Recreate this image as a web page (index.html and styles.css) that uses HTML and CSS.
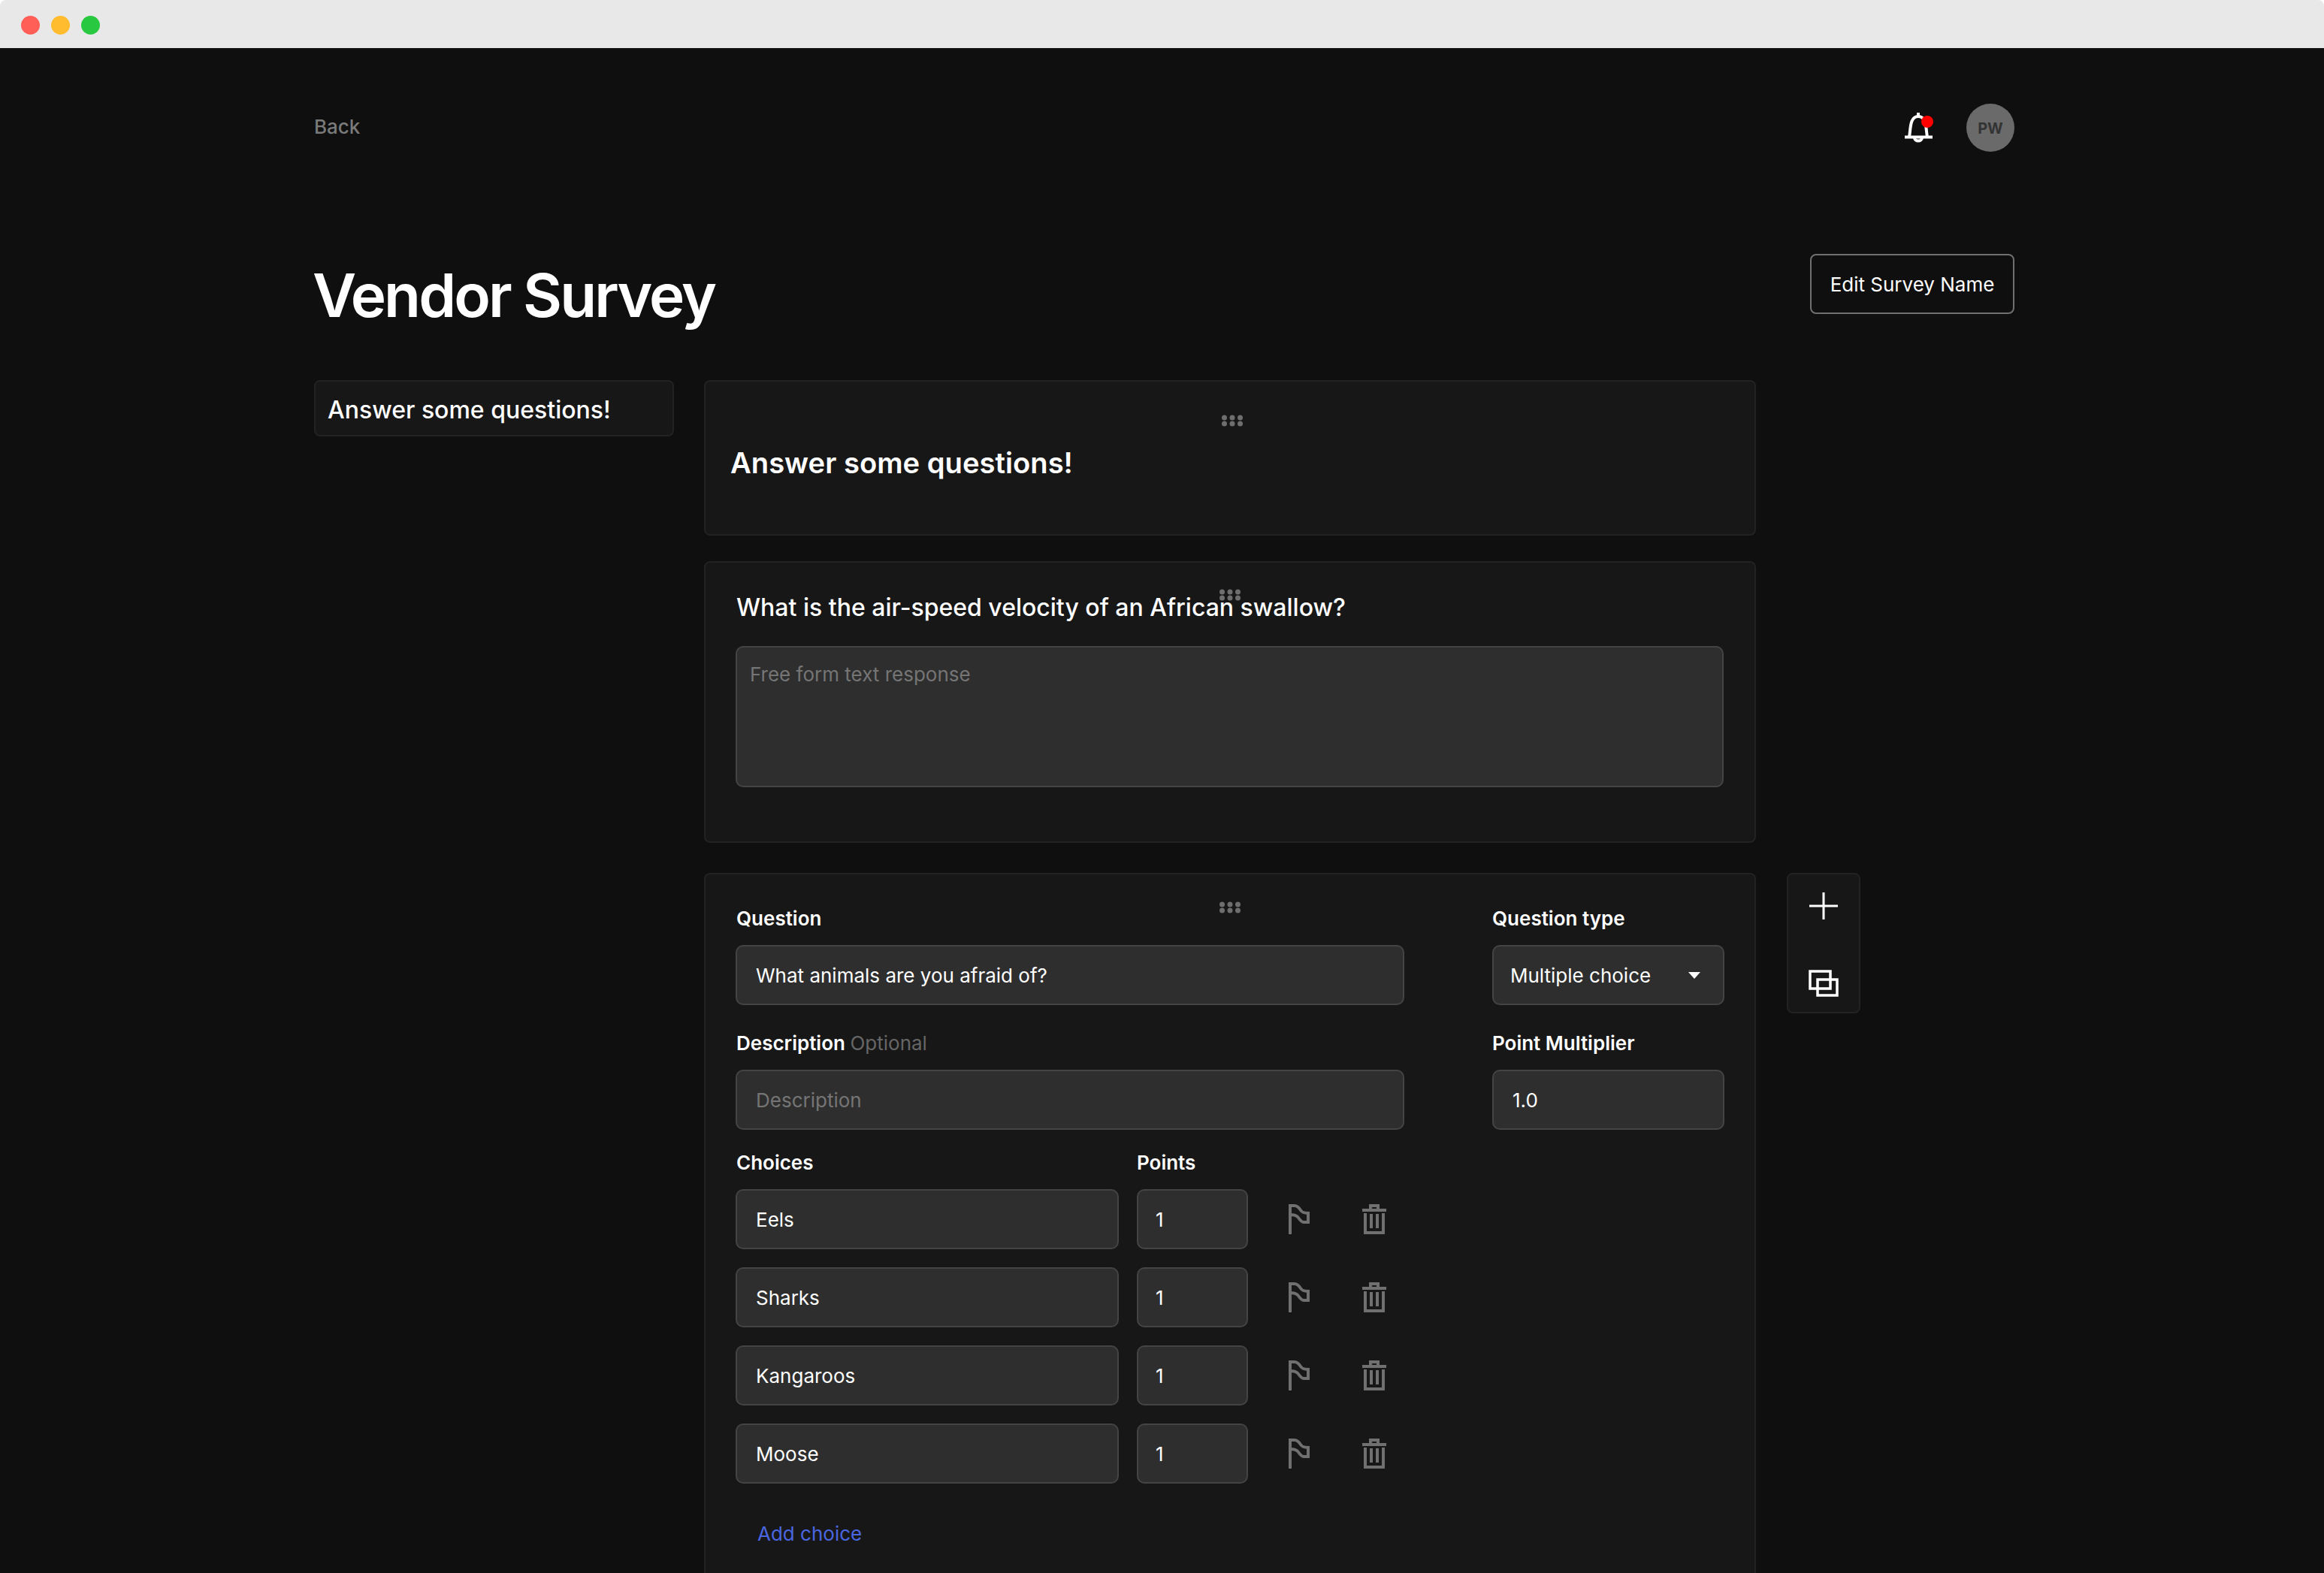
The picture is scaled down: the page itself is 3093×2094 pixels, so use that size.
FILE: index.html
```html
<!DOCTYPE html>
<html lang="en">
<head>
    <meta charset="UTF-8">
    <meta name="viewport" content="width=device-width, initial-scale=1.0">
    <title>Vendor Survey</title>
    <link rel="stylesheet" href="styles.css">
</head>
<body>
    <div class="titlebar">
        <span class="light light-red"></span>
        <span class="light light-yellow"></span>
        <span class="light light-green"></span>
    </div>

    <div class="page">
        <div class="topbar">
            <a class="back">Back</a>
            <div class="topbar-right">
                <svg class="bell" width="38" height="40" viewBox="0 0 38 40" fill="none" stroke="#fff" stroke-width="4">
                    <path d="M18 0V5"/>
                    <path d="M6 32C8 24 6 5 18 5C30 5 28 24 30 32"/>
                    <path d="M0 32.5H37"/>
                    <path d="M13 33C13 39 23 39 23 33"/>
                    <circle cx="30" cy="12" r="8" fill="#f00" stroke="none"/>
                </svg>
                <div class="avatar">PW</div>
            </div>
        </div>

        <div class="title-row">
            <h1>Vendor Survey</h1>
            <button class="edit-btn">Edit Survey Name</button>
        </div>

        <div class="columns">
            <div class="sidebar">Answer some questions!</div>

            <div class="main">
                <div class="card card-section">
                    <svg class="drag drag-section" width="28" height="16" viewBox="0 0 28 16"><use href="#dots"/></svg>
                    <h2>Answer some questions!</h2>
                </div>

                <div class="card card-text">
                    <svg class="drag drag-text" width="28" height="16" viewBox="0 0 28 16"><use href="#dots"/></svg>
                    <h3>What is the air-speed velocity of an African swallow?</h3>
                    <textarea class="input response" placeholder="Free form text response"></textarea>
                </div>

                <div class="card card-edit">
                    <svg class="drag drag-edit" width="28" height="16" viewBox="0 0 28 16"><use href="#dots"/></svg>
                    <div class="form-left">
                        <label>Question</label>
                        <input class="input" value="What animals are you afraid of?">
                        <label class="label-next">Description <span class="optional">Optional</span></label>
                        <input class="input" placeholder="Description">

                        <div class="choice-head">
                            <label class="choice-label">Choices</label>
                            <label>Points</label>
                        </div>

                        <div class="choice">
                            <input class="input choice-name" value="Eels">
                            <input class="input choice-points" value="1">
                            <svg class="flag" width="28" height="40" viewBox="0 0 28 40"><use href="#flag"/></svg>
                            <svg class="trash" width="32" height="40" viewBox="0 0 32 40"><use href="#trash"/></svg>
                        </div>
                        <div class="choice">
                            <input class="input choice-name" value="Sharks">
                            <input class="input choice-points" value="1">
                            <svg class="flag" width="28" height="40" viewBox="0 0 28 40"><use href="#flag"/></svg>
                            <svg class="trash" width="32" height="40" viewBox="0 0 32 40"><use href="#trash"/></svg>
                        </div>
                        <div class="choice">
                            <input class="input choice-name" value="Kangaroos">
                            <input class="input choice-points" value="1">
                            <svg class="flag" width="28" height="40" viewBox="0 0 28 40"><use href="#flag"/></svg>
                            <svg class="trash" width="32" height="40" viewBox="0 0 32 40"><use href="#trash"/></svg>
                        </div>
                        <div class="choice">
                            <input class="input choice-name" value="Moose">
                            <input class="input choice-points" value="1">
                            <svg class="flag" width="28" height="40" viewBox="0 0 28 40"><use href="#flag"/></svg>
                            <svg class="trash" width="32" height="40" viewBox="0 0 32 40"><use href="#trash"/></svg>
                        </div>

                        <a class="add-choice">Add choice</a>
                    </div>

                    <div class="form-right">
                        <label>Question type</label>
                        <div class="input select">
                            <span>Multiple choice</span>
                            <span class="caret"></span>
                        </div>
                        <label class="label-next">Point Multiplier</label>
                        <input class="input" value="1.0">
                    </div>
                </div>
            </div>

            <div class="toolbar">
                <svg width="38" height="38" viewBox="0 0 38 38" fill="none" stroke="#fff" stroke-width="3">
                    <path d="M19 1V37M0 19H38"/>
                </svg>
                <svg width="40" height="36" viewBox="0 0 40 36" fill="none" stroke="#fff" stroke-width="3.5">
                    <rect x="2" y="2" width="27" height="23"/>
                    <rect x="12" y="13" width="26" height="21"/>
                </svg>
            </div>
        </div>
    </div>

    <!-- shared icons -->
    <svg class="defs" width="0" height="0">
        <defs>
            <g id="dots" fill="#6e6e6e">
                <circle cx="3.5" cy="4" r="3.5"/><circle cx="14" cy="4" r="3.5"/><circle cx="24.5" cy="4" r="3.5"/>
                <circle cx="3.5" cy="12" r="3.5"/><circle cx="14" cy="12" r="3.5"/><circle cx="24.5" cy="12" r="3.5"/>
            </g>
            <path id="flag" fill="none" stroke="#707070" stroke-width="4" d="M2 40V2H8C12 2 14 5 16 8C18 11 20 12 26 12V24H20C17 24 15 21 13 18C11 15 8 14 2 14"/>
            <g id="trash" fill="none" stroke="#707070" stroke-width="4">
                <path d="M0 8H32"/>
                <path d="M11 7V2H21V7"/>
                <path d="M4 12V38H28V12"/>
                <path d="M12 13V32M20 13V32"/>
            </g>
        </defs>
    </svg>
</body>
</html>
```

FILE: styles.css
```css
* {
    box-sizing: border-box;
}
html, body {
    margin: 0;
    height: 2094px;
    overflow: hidden;
    background-color: #fff;
}
body {
    font-family: Inter, "Liberation Sans", sans-serif;
    color: #fff;
}
.titlebar {
    display: flex;
    align-items: center;
    gap: 15px;
    height: 64px;
    padding: 2px 0 0 28px;
    background-color: #e8e8e8;
    border-radius: 8px 8px 0 0;
}
.light {
    width: 25px;
    height: 25px;
    border-radius: 50%;
}
.light-red { background-color: #ff5f57; }
.light-yellow { background-color: #febc2e; }
.light-green { background-color: #28c840; }

.page {
    height: 2030px;
    padding: 74px 412px 0 418px;
    background-color: #0f0f0f;
}
.topbar {
    display: flex;
    justify-content: space-between;
    align-items: center;
    height: 64px;
}
.back {
    padding-bottom: 4px;
    font-size: 26px;
    font-weight: 500;
    color: #7a7a7a;
}
.topbar-right {
    display: flex;
    align-items: center;
    gap: 44px;
}
.avatar {
    display: flex;
    align-items: center;
    justify-content: center;
    width: 64px;
    height: 64px;
    padding-top: 2px;
    border-radius: 50%;
    background-color: #6a6a6a;
    color: #333;
    font-size: 20px;
    font-weight: 700;
}
.title-row {
    display: flex;
    justify-content: space-between;
    align-items: flex-start;
    height: 168px;
    margin-top: 136px;
}
h1 {
    margin: 0 0 0 -2px;
    font-size: 80px;
    font-weight: 600;
    line-height: 110px;
    letter-spacing: -2.9px;
}
.edit-btn {
    width: 272px;
    height: 80px;
    padding: 0;
    background-color: transparent;
    border: 2px solid #707070;
    border-radius: 8px;
    color: #fff;
    font-family: inherit;
    font-size: 26px;
}

.columns {
    display: flex;
    align-items: flex-start;
}
.sidebar {
    flex: none;
    width: 479px;
    height: 75px;
    margin-right: 40px;
    padding: 0 16px;
    line-height: 75px;
    font-size: 32px;
    font-weight: 500;
    background-color: #171717;
    border: 2px solid #222;
    border-radius: 8px;
}
.main {
    flex: none;
    width: 1400px;
    margin-right: 41px;
}
.card {
    position: relative;
    background-color: #171717;
    border: 2px solid #222;
    border-radius: 8px;
}
.drag {
    position: absolute;
}
.drag-section { left: 687px; top: 44px; }
.drag-text { left: 684px; top: 35px; }
.drag-edit { left: 684px; top: 36px; }

.card-section {
    height: 207px;
    padding: 82px 33px 0;
}
h2 {
    margin: 0;
    font-size: 38.2px;
    font-weight: 600;
    line-height: 52px;
}
.card-text {
    height: 375px;
    margin-top: 34px;
    padding: 40px 41px 0 40px;
}
h3 {
    margin: 0 0 31px 1px;
    font-size: 32px;
    font-weight: 550;
    line-height: 40px;
}
.card-edit {
    display: flex;
    gap: 117px;
    margin-top: 40px;
    padding: 41px 41px 60px 40px;
}
.form-left {
    flex: none;
    width: 890px;
}
.form-right {
    flex: none;
    width: 309px;
}
label {
    display: block;
    margin-bottom: 17px;
    font-size: 26px;
    font-weight: 600;
    line-height: 36px;
}
.form-left > label, .choice-label {
    padding-left: 1px;
}
.label-next {
    margin-top: 33px;
}
.optional {
    font-weight: 400;
    color: #666;
}
.input {
    display: block;
    width: 100%;
    height: 80px;
    padding: 0 25px;
    background-color: #2e2e2e;
    border: 2px solid #444;
    border-radius: 10px;
    outline: none;
    color: #fff;
    font-family: inherit;
    font-size: 26px;
}
.input::placeholder {
    color: #757575;
    opacity: 1;
}
.response {
    height: 188px;
    padding: 18px 17px;
    resize: none;
    line-height: 36px;
}
.select {
    display: flex;
    align-items: center;
    justify-content: space-between;
    padding: 0 30px 0 22px;
}
.caret {
    width: 0;
    height: 0;
    border-left: 8px solid transparent;
    border-right: 8px solid transparent;
    border-top: 9px solid #fff;
}
.choice-head {
    display: flex;
    margin-top: 26px;
}
.choice-label {
    width: 534px;
}
.choice {
    display: flex;
    align-items: center;
    margin-bottom: 24px;
}
.choice-name {
    width: 510px;
}
.choice-points {
    width: 148px;
    margin-left: 24px;
    padding: 0 23px;
}
.flag {
    margin-left: 54px;
}
.trash {
    margin-left: 70px;
}
.add-choice {
    display: block;
    margin: 49px 0 0 29px;
    font-size: 26px;
    line-height: 36px;
    color: #4a66e0;
}
.toolbar {
    display: flex;
    flex-direction: column;
    align-items: center;
    gap: 66px;
    flex: none;
    width: 98px;
    height: 187px;
    margin-top: 656px;
    padding-top: 23px;
    background-color: #171717;
    border: 2px solid #222;
    border-radius: 8px;
}
.defs {
    position: absolute;
}
```
